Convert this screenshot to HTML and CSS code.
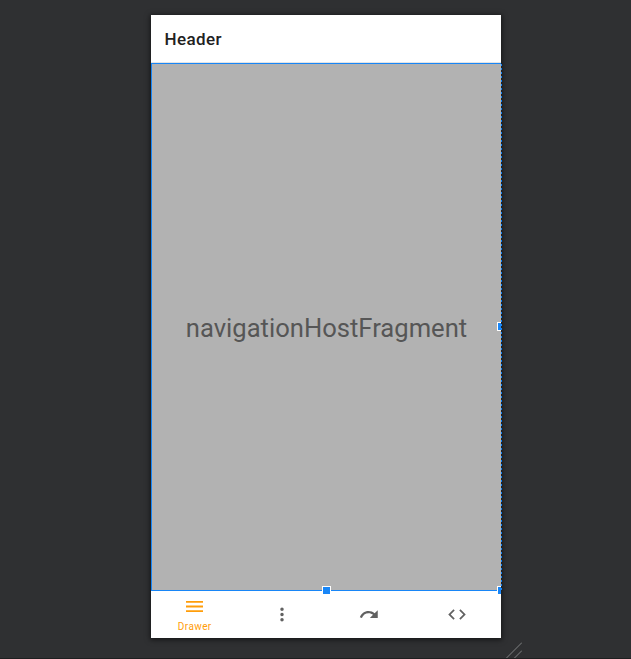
FILE: index.html
```html
<!DOCTYPE html>
<html lang="en">
<head>
<meta charset="utf-8">
<title>Layout preview</title>
<link rel="stylesheet" href="styles.css">
</head>
<body>
<main class="device">
  <header class="toolbar">Header</header>
  <section class="host">
    <span class="host-name">navigationHostFragment</span>
    <i class="edge"></i>
    <i class="handle handle-right"></i>
    <i class="handle handle-bottom"></i>
    <i class="handle handle-corner"></i>
  </section>
  <nav class="tabs">
    <a class="tab active">
      <svg class="menu" viewBox="0 0 17 11"><path d="M0 0h17v1.8H0zM0 4.6h17v1.8H0zM0 9.2h17V11H0z"/></svg>
      <span>Drawer</span>
    </a>
    <a class="tab"><svg class="icon" viewBox="0 0 24 24"><path d="M12 8a2 2 0 1 0 0-4 2 2 0 0 0 0 4zm0 2a2 2 0 1 0 0 4 2 2 0 0 0 0-4zm0 6a2 2 0 1 0 0 4 2 2 0 0 0 0-4z"/></svg></a>
    <a class="tab"><svg class="icon" viewBox="0 0 24 24"><path d="M18.4 10.6C16.55 8.99 14.15 8 11.5 8c-4.65 0-8.58 3.03-9.96 7.22L3.9 16c1.05-3.19 4.05-5.5 7.6-5.5 1.95 0 3.73.72 5.12 1.88L13 16h9V7l-3.6 3.6z"/></svg></a>
    <a class="tab"><svg class="icon" viewBox="0 0 24 24"><path d="M9.4 16.6 4.8 12l4.6-4.6L8 6l-6 6 6 6 1.4-1.4zm5.2 0 4.6-4.6-4.6-4.6L16 6l6 6-6 6-1.4-1.4z"/></svg></a>
  </nav>
</main>
<svg class="grip" viewBox="0 0 18 17"><path d="M1 17.5 18 .5M9 17.5l9-9"/></svg>
</body>
</html>
```
FILE: styles.css
```css
* { box-sizing: border-box; }
body {
  margin: 0;
  height: 659px;
  padding: 15px 0 0 151px;
  overflow: hidden;
  position: relative;
  background: #2f3032;
  border-bottom: 1px solid #1e1f20;
  font-family: Roboto, sans-serif;
}
.device {
  width: 350px;
  height: 623px;
  display: flex;
  flex-direction: column;
  background: #fff;
  box-shadow: 0 1px 5px 1px rgba(0, 0, 0, .55);
}
.toolbar {
  height: 48px;
  display: flex;
  align-items: center;
  padding: 0 0 0 13.5px;
  border-bottom: 1px solid #e4e4e4;
  font-size: 17px;
  font-weight: 500;
  letter-spacing: .4px;
  color: #212121;
}
.host {
  height: 528px;
  position: relative;
  z-index: 1;
  display: flex;
  align-items: center;
  justify-content: center;
  background: #b2b2b2;
  border: 1px solid #1886f7;
  border-right: 0;
  clip-path: inset(0 -1px -5px 0);
}
.host-name {
  padding-top: 2px;
  font-size: 25.6px;
  color: #565656;
  white-space: nowrap;
}
.edge {
  position: absolute;
  right: -1px;
  top: 0;
  bottom: 0;
  width: 1px;
  background: repeating-linear-gradient(#1886f7 0 2px, #222 2px 4px);
}
.handle {
  position: absolute;
  width: 9px;
  height: 9px;
  background: #1886f7;
  border: 1px solid #fff;
}
.handle-right { right: -5px; top: 258px; clip-path: inset(0 5px 0 0); }
.handle-bottom { left: 170px; bottom: -5px; }
.handle-corner { right: -5px; bottom: -5px; clip-path: inset(0 5px 0 0); }
.tabs { flex: 1; display: flex; }
.tab {
  flex: 1;
  display: flex;
  flex-direction: column;
  align-items: center;
  justify-content: center;
  color: #616161;
  fill: currentColor;
}
.icon { width: 22px; height: 21px; display: block; margin: 0 1px 1px 0; }
.active { color: #ff9d0a; justify-content: flex-start; padding-top: 10px; }
.active span { font-size: 10px; line-height: 12px; margin-top: 9px; letter-spacing: .4px; }
.menu { width: 17px; height: 11px; display: block; }
.grip {
  position: absolute;
  left: 504px;
  top: 642px;
  width: 18px;
  height: 17px;
  fill: none;
  stroke: #808182;
  stroke-width: 1;
}
```
